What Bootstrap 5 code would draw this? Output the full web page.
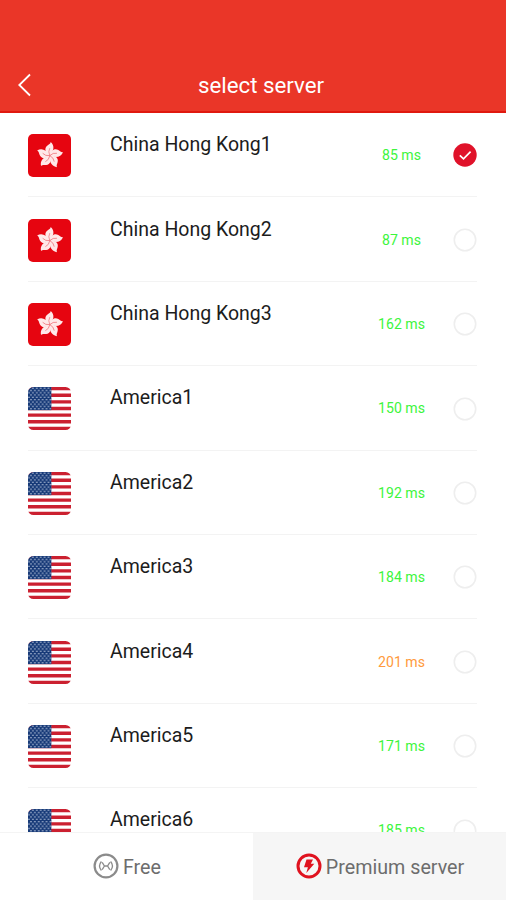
<!DOCTYPE html>
<html lang="en">
<head>
<meta charset="utf-8">
<meta name="viewport" content="width=device-width, initial-scale=1">
<title>select server</title>
<link href="https://cdn.jsdelivr.net/npm/bootstrap@5.3.0/dist/css/bootstrap.min.css" rel="stylesheet">
<style>
body { font-family: Roboto, sans-serif; color: #1c1c1c; }
.topbar { height: 113px; background: #ea3628; border-bottom: 2px solid #e0190f; padding: 59px 16px 0 18px; }
.topbar h1 { font-size: 22.3px; line-height: 53px; font-weight: 400; }
.side { width: 14px; }
.servers { padding: 0 29px 0 28px; }
.server { height: 84.4px; padding-top: 21.3px; box-shadow: inset 0 -1px #f3f3f3; }
.flag { width: 43px; height: 43px; margin-right: 39px; }
.title { font-size: 19.5px; line-height: 21px; }
.ping { width: 72px; margin-right: 15.5px; font-size: 14.1px; line-height: 43px; color: #3df53d; }
.ping.slow { color: #ff9a3c; }
.pick { width: 24px; height: 24px; margin-top: 9.2px; }
.tabs { height: 68px; }
.tab { font-size: 19.7px; color: #6d6d6d; gap: 4px; background: #fff; border-top: 1px solid #f4f4f4; padding: 3px 0 0 1px; }
.tab.on { background: #f6f6f6; }
.tab svg { width: 26px; height: 26px; margin-top: -4px; }
</style>
</head>
<body class="vh-100 overflow-hidden d-flex flex-column bg-white">
<svg class="position-absolute" width="0" height="0" aria-hidden="true">
  <defs>
    <clipPath id="round"><rect width="43" height="43" rx="5.5"/></clipPath>
    <pattern id="stars" width="3.9" height="4.6" patternUnits="userSpaceOnUse">
      <rect width="3.9" height="4.6" fill="#173a78"/>
      <circle cx="1" cy="1.15" r=".75" fill="#d5dff0"/><circle cx="2.95" cy="3.45" r=".75" fill="#d5dff0"/>
    </pattern>
    <path id="petal" d="M0 0C-4.4-2.6-6-7-2.6-9.8C-1-11.2 .8-11.8 .9-13.6C4.6-10.4 4.8-5.5 0 0Z"/>
  </defs>
  <symbol id="hk" viewBox="0 0 43 43">
    <rect width="43" height="43" rx="5" fill="#e60510"/>
    <g transform="translate(21.8 21.6)" fill="#ffe9e9">
      <use href="#petal"/><use href="#petal" transform="rotate(72)"/><use href="#petal" transform="rotate(144)"/><use href="#petal" transform="rotate(216)"/><use href="#petal" transform="rotate(288)"/>
      <g fill="none" stroke="#ee7078" stroke-width=".7"><path id="vein" d="M0 0Q-2-4 0-7.5"/><use href="#vein" transform="rotate(72)"/><use href="#vein" transform="rotate(144)"/><use href="#vein" transform="rotate(216)"/><use href="#vein" transform="rotate(288)"/></g>
    </g>
  </symbol>
  <symbol id="us" viewBox="0 0 43 43">
    <g clip-path="url(#round)">
      <rect width="43" height="43" fill="#fff"/>
      <path d="M0 1.65H43M0 8.27H43M0 14.88H43M0 21.5H43M0 28.12H43M0 34.73H43M0 41.35H43" stroke="#cb2030" stroke-width="3.31"/>
      <rect width="23.4" height="23.15" fill="url(#stars)"/>
    </g>
  </symbol>
  <symbol id="off" viewBox="0 0 24 24"><circle cx="12" cy="12" r="10.7" fill="#fff" stroke="#eee" stroke-width="1.6"/></symbol>
  <symbol id="on" viewBox="0 0 24 24"><circle cx="12" cy="12" r="11.7" fill="#e0122a"/><path d="M6.8 12.3L10.5 15.8L17.6 8.7" fill="none" stroke="#fff" stroke-width="1.7"/></symbol>
</svg>

<header class="topbar flex-shrink-0 d-flex align-items-start">
  <svg class="side flex-shrink-0" height="52" viewBox="0 0 14 52" fill="none" stroke="#fff" stroke-width="1.8"><path d="M12 15.5L1.3 26L12 36.5"/></svg>
  <h1 class="flex-grow-1 text-center text-white m-0">select server</h1>
</header>

<main class="servers flex-grow-1 overflow-hidden">
  <div class="server d-flex align-items-start"><svg class="flag"><use href="#hk"/></svg><div class="title flex-grow-1">China Hong Kong1</div><div class="ping text-center">85 ms</div><svg class="pick"><use href="#on"/></svg></div>
  <div class="server d-flex align-items-start"><svg class="flag"><use href="#hk"/></svg><div class="title flex-grow-1">China Hong Kong2</div><div class="ping text-center">87 ms</div><svg class="pick"><use href="#off"/></svg></div>
  <div class="server d-flex align-items-start"><svg class="flag"><use href="#hk"/></svg><div class="title flex-grow-1">China Hong Kong3</div><div class="ping text-center">162 ms</div><svg class="pick"><use href="#off"/></svg></div>
  <div class="server d-flex align-items-start"><svg class="flag"><use href="#us"/></svg><div class="title flex-grow-1">America1</div><div class="ping text-center">150 ms</div><svg class="pick"><use href="#off"/></svg></div>
  <div class="server d-flex align-items-start"><svg class="flag"><use href="#us"/></svg><div class="title flex-grow-1">America2</div><div class="ping text-center">192 ms</div><svg class="pick"><use href="#off"/></svg></div>
  <div class="server d-flex align-items-start"><svg class="flag"><use href="#us"/></svg><div class="title flex-grow-1">America3</div><div class="ping text-center">184 ms</div><svg class="pick"><use href="#off"/></svg></div>
  <div class="server d-flex align-items-start"><svg class="flag"><use href="#us"/></svg><div class="title flex-grow-1">America4</div><div class="ping slow text-center">201 ms</div><svg class="pick"><use href="#off"/></svg></div>
  <div class="server d-flex align-items-start"><svg class="flag"><use href="#us"/></svg><div class="title flex-grow-1">America5</div><div class="ping text-center">171 ms</div><svg class="pick"><use href="#off"/></svg></div>
  <div class="server d-flex align-items-start"><svg class="flag"><use href="#us"/></svg><div class="title flex-grow-1">America6</div><div class="ping text-center">185 ms</div><svg class="pick"><use href="#off"/></svg></div>
</main>

<nav class="tabs flex-shrink-0 d-flex">
  <div class="tab w-50 d-flex align-items-center justify-content-center">
    <svg viewBox="0 0 26 26" fill="none" stroke="#8b8b8b"><circle cx="13" cy="13" r="11.4" stroke-width="2.2"/><g stroke-width="1.3"><path d="M8.4 8.5Q4.6 13 8.4 17.5M17.6 8.5Q21.4 13 17.6 17.5M9.2 9.4L11.4 13L9.2 16.6M16.8 9.4L14.6 13L16.8 16.6M11 13H15"/></g></svg>
    <span>Free</span>
  </div>
  <div class="tab on w-50 d-flex align-items-center justify-content-center">
    <svg viewBox="0 0 26 26"><circle cx="13" cy="13" r="11" fill="none" stroke="#e0121f" stroke-width="3"/><path d="M10.5 6.5H17L14.8 10.8H18.3L10.3 20L11.9 14.2H8Z" fill="#e0121f"/></svg>
    <span>Premium server</span>
  </div>
</nav>
<script src="https://cdn.jsdelivr.net/npm/bootstrap@5.3.0/dist/js/bootstrap.bundle.min.js"></script>
</body>
</html>
